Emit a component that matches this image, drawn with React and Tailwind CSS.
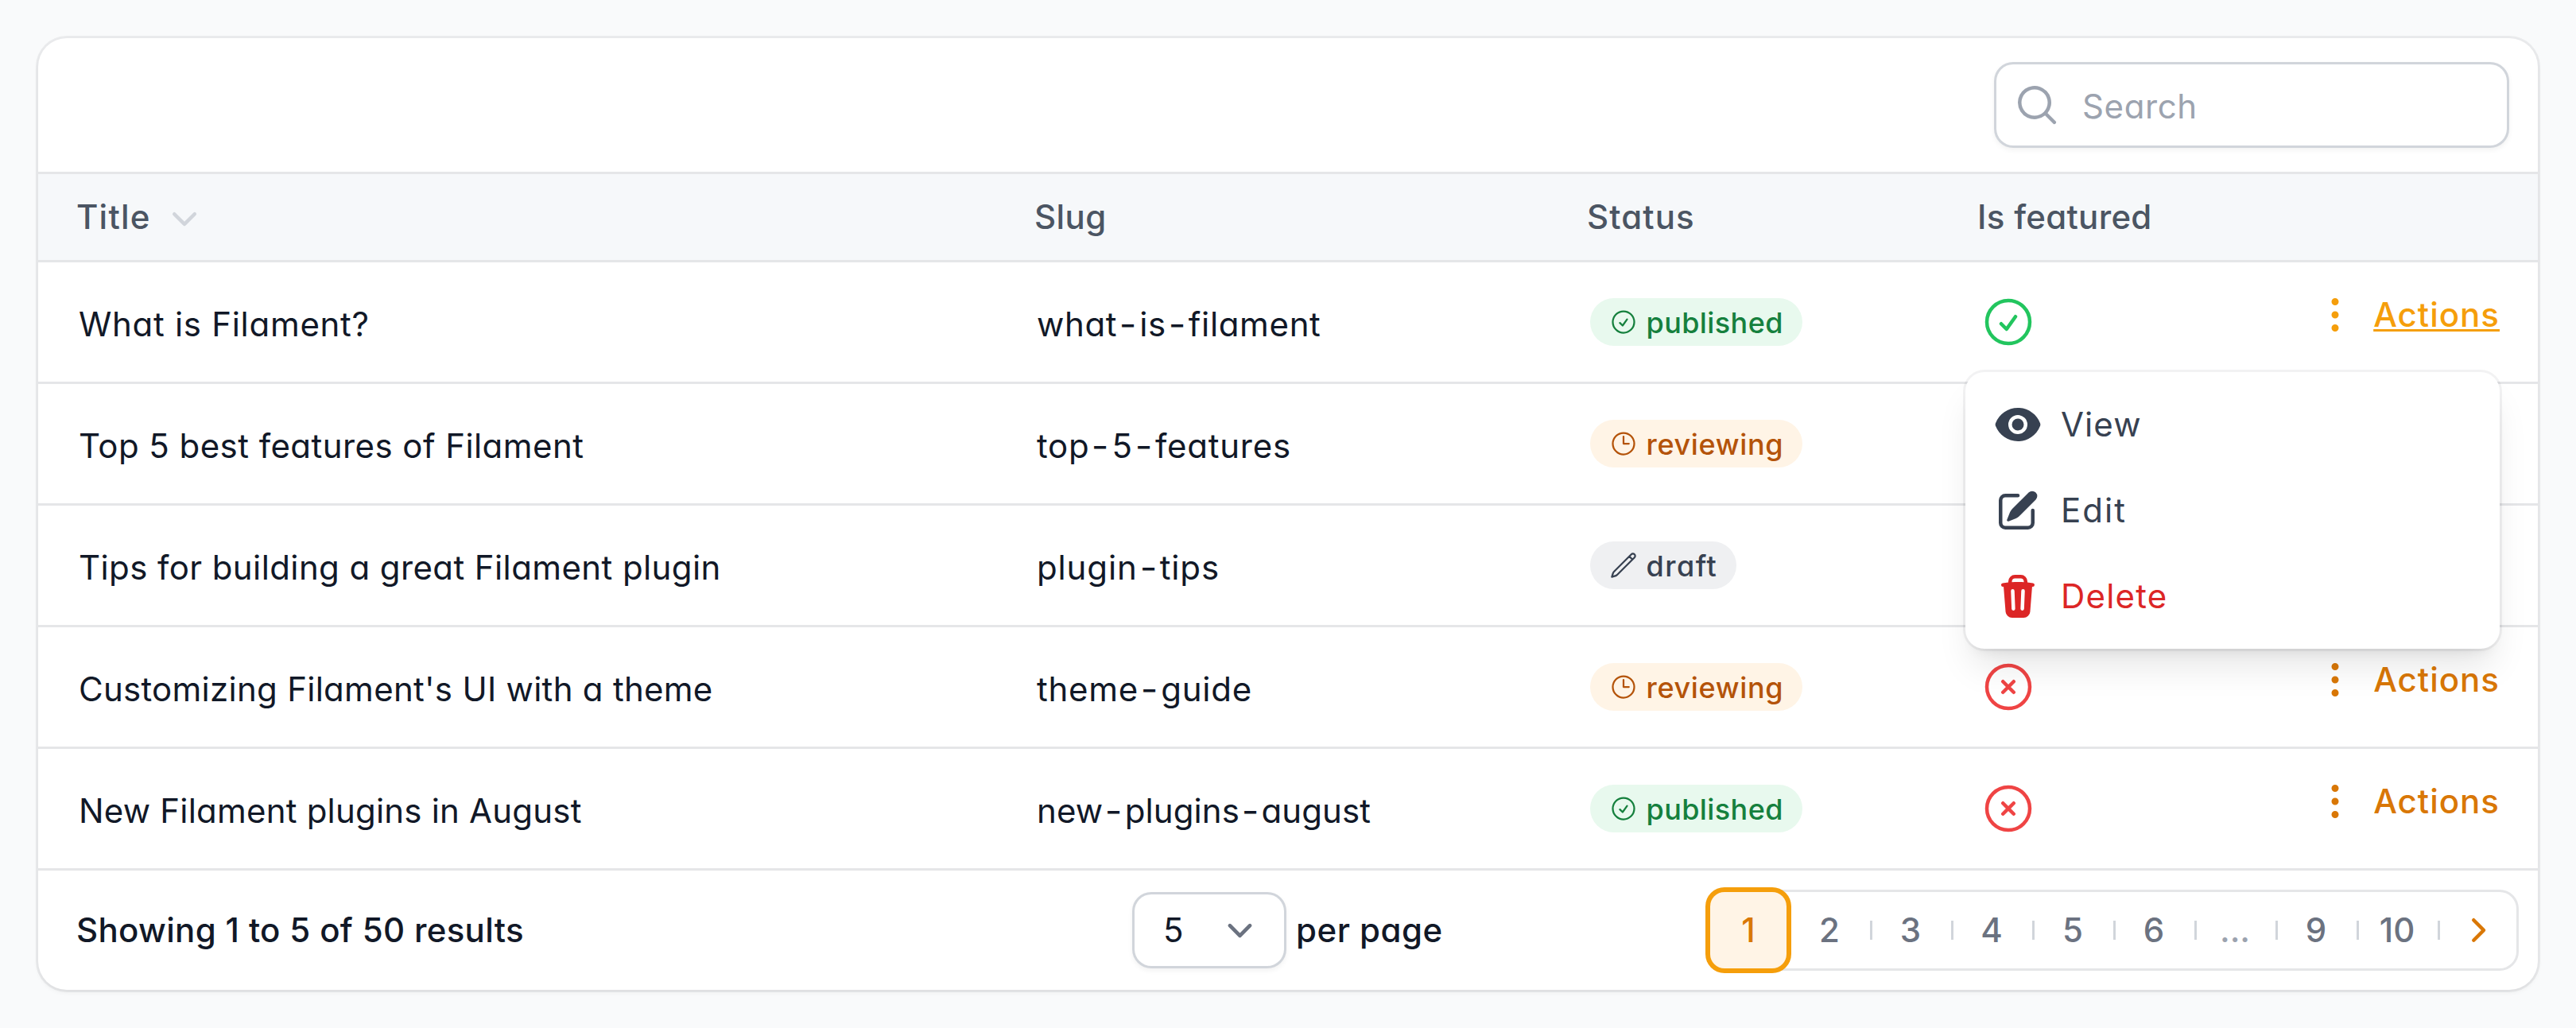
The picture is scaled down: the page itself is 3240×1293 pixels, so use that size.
import {
  HiMiniChevronDown,
  HiMiniChevronRight,
  HiMiniEllipsisVertical,
  HiMiniEye,
  HiMiniMagnifyingGlass,
  HiMiniPencilSquare,
  HiMiniTrash,
  HiOutlineCheckCircle,
  HiOutlineClock,
  HiOutlinePencil,
  HiOutlineXCircle,
} from "react-icons/hi2";

const STATUSES = {
  published: { icon: HiOutlineCheckCircle, style: "bg-[#e8f9ee] text-[#15803d] tracking-[0.4px]" },
  reviewing: { icon: HiOutlineClock, style: "bg-[#fff4e6] text-[#b45309] tracking-[0.65px]" },
  draft: { icon: HiOutlinePencil, style: "bg-[#eff0f2] text-[#374151] tracking-[1.5px]" },
};

const POSTS = [
  { title: "What is Filament?", titleStyle: "tracking-[0.7px]", slug: "what-is-filament", slugStyle: "tracking-[0.65px]", status: "published", featured: true, open: true },
  { title: "Top 5 best features of Filament", titleStyle: "tracking-[0.44px]", slug: "top-5-features", slugStyle: "tracking-[0.75px]", status: "reviewing", featured: true },
  { title: "Tips for building a great Filament plugin", titleStyle: "tracking-[0.4px]", slug: "plugin-tips", slugStyle: "tracking-[0.85px]", status: "draft", featured: false },
  { title: "Customizing Filament's UI with a theme", titleStyle: "tracking-[0.27px]", slug: "theme-guide", slugStyle: "tracking-[0.75px]", status: "reviewing", featured: false },
  { title: "New Filament plugins in August", titleStyle: "tracking-[0.2px]", slug: "new-plugins-august", slugStyle: "tracking-[0.1px]", status: "published", featured: false },
];

const PAGES = ["2", "3", "4", "5", "6", "...", "9", "10"];

function Slug({ value, className }) {
  const parts = value.split("-");
  return (
    <span className={className}>
      {parts.map((part, i) => (
        <span key={i}>
          {i > 0 && <span className="mx-[4px] inline-block scale-x-112">-</span>}
          {part}
        </span>
      ))}
    </span>
  );
}

function Badge({ status }) {
  const { icon: Icon, style } = STATUSES[status];
  return (
    <span className={`flex h-[60px] items-center rounded-full pr-6 pl-[23.5px] text-[36px] font-medium ${style}`}>
      <Icon className="mr-[11px] size-9" />
      <span className="pt-[2px] leading-[54px]">{status}</span>
    </span>
  );
}

function ActionsButton({ open }) {
  return (
    <button className={`flex items-center gap-[18px] font-medium tracking-[1px] ${open ? "text-[#f59e0b]" : "text-[#d97706]"}`}>
      <HiMiniEllipsisVertical className="size-[60px]" />
      <span className={`leading-[60px] ${open ? "underline decoration-[3px] underline-offset-[3px]" : ""}`}>Actions</span>
    </button>
  );
}

function MenuItem({ icon: Icon, className, children }) {
  return (
    <div className={`flex h-[108px] items-center gap-6 px-6 ${className}`}>
      <Icon className="size-[60px]" />
      <span className="leading-[60px]">{children}</span>
    </div>
  );
}

function ActionsMenu() {
  return (
    <div className="absolute top-[138px] right-0 z-10 w-[672px] rounded-[24px] bg-white p-3 shadow-[0_0_0_3px_rgba(3,7,18,0.05),0_30px_45px_-9px_rgba(0,0,0,0.1),0_12px_18px_-12px_rgba(0,0,0,0.1)]">
      <MenuItem icon={HiMiniEye} className="tracking-[1.1px] text-[#374151]">View</MenuItem>
      <MenuItem icon={HiMiniPencilSquare} className="tracking-[2px] text-[#374151]">Edit</MenuItem>
      <MenuItem icon={HiMiniTrash} className="tracking-[1.2px] text-[#dc2626]">Delete</MenuItem>
    </div>
  );
}

function Row({ post }) {
  const Featured = post.featured ? HiOutlineCheckCircle : HiOutlineXCircle;
  return (
    <div className="relative grid h-[153px] grid-cols-[1205px_693px_492px_1fr] items-center border-b-[3px] border-[#e5e6e8] px-12">
      <div className="pt-[6px] pl-[3px]">
        <span className={post.titleStyle}>{post.title}</span>
      </div>
      <div className="pt-[6px] pl-[3px]">
        <Slug value={post.slug} className={post.slugStyle} />
      </div>
      <div className="flex pl-[6px]">
        <Badge status={post.status} />
      </div>
      <div className="relative flex h-[150px] items-center justify-between pl-[4px]">
        <Featured className={`size-[72px] ${post.featured ? "text-[#22c55e]" : "text-[#ef4444]"}`} />
        <div className="pb-[18px]">
          <ActionsButton open={post.open} />
        </div>
        {post.open && <ActionsMenu />}
      </div>
    </div>
  );
}

function Pagination() {
  return (
    <div className="flex h-24 items-center rounded-[21px] font-medium text-[#6b7280] shadow-[0_0_0_3px_#e5e6e8]">
      <div className="mr-[6px] flex size-24 items-center justify-center rounded-[18px] bg-[#fff4e6] text-[#d97706] shadow-[0_0_0_6px_#f59e0b]">1</div>
      {PAGES.map((page) => (
        <div key={page} className="flex items-center">
          <span className={`w-24 text-center ${page === "..." ? "text-[#9ca3af]" : ""}`}>{page}</span>
          <span className="ml-[3px] h-6 w-[3px] bg-[#d1d5db]" />
        </div>
      ))}
      <div className="flex w-24 justify-center pr-[4px]">
        <HiMiniChevronRight className="size-[60px] text-[#d97706]" />
      </div>
    </div>
  );
}

export default function App() {
  return (
    <div className="h-[1293px] w-[3240px] bg-[#f9fafb] p-12 font-['Inter',sans-serif] text-[42px] leading-[60px] text-[#111827] [font-feature-settings:'cv11']">
      <div className="h-[1197px] w-[3144px] rounded-[36px] bg-white shadow-[0_0_0_3px_rgba(3,7,18,0.06),0_3px_6px_0_rgba(0,0,0,0.06)]">
        <div className="flex h-[171px] items-center justify-end border-b-[3px] border-[#e5e6e8] pr-[39px]">
          <div className="flex h-[102px] w-[642px] items-center rounded-[21px] pl-[21px] text-[#9ca3af] shadow-[0_0_0_3px_#d1d5db,0_3px_6px_3px_rgba(0,0,0,0.05)]">
            <HiMiniMagnifyingGlass className="size-[60px]" />
            <span className="pt-[3px] pl-[27px] tracking-[0.6px]">Search</span>
          </div>
        </div>

        <div className="grid h-[111px] grid-cols-[1205px_693px_492px_1fr] items-center border-b-[3px] border-[#e5e6e8] bg-[#f6f8fa] px-12 font-medium text-[#4b5563]">
          <div className="flex items-center gap-[12px]">
            <span className="tracking-[1.2px]">Title</span>
            <HiMiniChevronDown className="size-[60px] text-[#d1d5db]" />
          </div>
          <span className="tracking-[0.4px]">Slug</span>
          <span className="pl-[2px] tracking-[1.1px]">Status</span>
          <span className="pl-px tracking-[0.3px]">Is featured</span>
        </div>

        {POSTS.map((post) => (
          <Row key={post.slug} post={post} />
        ))}

        <div className="flex h-[150px] items-center pr-[27px] pl-12">
          <span className="w-[1331px] font-medium tracking-[0.33px]">Showing 1 to 5 of 50 results</span>
          <div className="flex h-[90px] w-[188px] items-center justify-between rounded-[21px] pr-6 pl-9 shadow-[0_0_0_3px_#d1d5db,0_3px_6px_3px_rgba(0,0,0,0.05)]">
            <span>5</span>
            <svg viewBox="0 0 20 20" className="size-[63px] text-[#6b7280]" fill="none" stroke="currentColor" strokeWidth="1.5" strokeLinecap="round" strokeLinejoin="round">
              <path d="m6 8 4 4 4-4" />
            </svg>
          </div>
          <span className="ml-[15px] font-medium tracking-[0.5px]">per page</span>
          <div className="ml-auto">
            <Pagination />
          </div>
        </div>
      </div>
    </div>
  );
}
